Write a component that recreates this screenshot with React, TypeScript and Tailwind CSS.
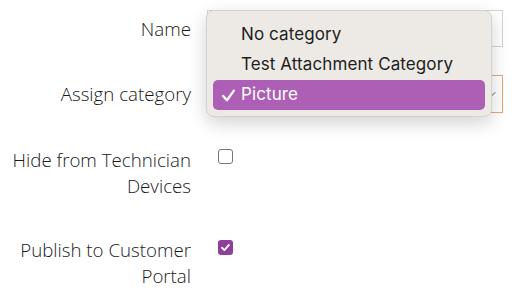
import { ChevronDown } from "lucide-react";

const label = "w-[191px] shrink-0 text-right text-[18.7px] font-light leading-[26px] text-[#1a1a1a]";

export default function App() {
  const options = ["No category", "Test Attachment Category", "Picture"];

  return (
    <div className="relative h-[297px] w-[512px] overflow-hidden bg-white font-['Open_Sans',sans-serif]">
      <div className="flex flex-col pt-[10px] pr-[9px]">
        {/* Name */}
        <div className="flex h-[37px] items-center gap-4">
          <div className={label}>Name</div>
          <input className="h-[37px] flex-1 border border-[#d4d4d4] bg-white px-2" />
        </div>

        {/* Assign category */}
        <div className="mt-[28px] flex h-[38px] items-center gap-4">
          <div className={label}>Assign category</div>
          <div className="flex h-[38px] flex-1 items-center justify-end border border-[#e9a572] bg-white pr-1">
            <ChevronDown className="h-3 w-3 text-[#555]" strokeWidth={2} />
          </div>
        </div>

        {/* Hide from Technician Devices */}
        <div className="mt-[34px] flex items-start gap-[27px]">
          <div className={label}>
            Hide from Technician
            <br />
            Devices
          </div>
          <div className="mt-[2px] h-[15px] w-[15px] rounded-[3px] border-[1.5px] border-[#767676] bg-white" />
        </div>

        {/* Publish to Customer Portal */}
        <div className="mt-[38px] flex items-start gap-[27px]">
          <div className={label}>
            Publish to Customer
            <br />
            Portal
          </div>
          <div className="mt-[3px] flex h-[15px] w-[15px] items-center justify-center rounded-[3px] bg-[#8e3f9c]">
            <svg viewBox="0 0 12 12" className="h-[11px] w-[11px]" fill="none">
              <path d="M2.2 6.3 L4.8 8.8 L9.8 3.2" stroke="white" strokeWidth="2" strokeLinecap="round" strokeLinejoin="round" />
            </svg>
          </div>
        </div>
      </div>

      {/* native select menu */}
      <div className="absolute left-[206px] top-[10px] w-[286px] rounded-[8px] border border-[#d6d3cf] bg-[#edeae6] px-[6px] pb-[6px] pt-[9px] font-['Inter',sans-serif] text-[17px] text-[#1d1d1d] shadow-[0_6px_18px_rgba(0,0,0,0.18)]">
        {options.map((opt) => {
          const selected = opt === "Picture";
          return (
            <div
              key={opt}
              className={
                selected
                  ? "flex h-[30px] items-center rounded-[5px] bg-[#ad5fb5] text-white"
                  : "flex h-[30px] items-center"
              }
            >
              <span className="flex w-[28px] justify-center">
                {selected && (
                  <svg viewBox="0 0 14 14" className="ml-[3px] h-[15px] w-[15px]" fill="none">
                    <path d="M2 7.5 L5.5 11.5 L12 2.5" stroke="white" strokeWidth="2.2" strokeLinecap="round" strokeLinejoin="round" />
                  </svg>
                )}
              </span>
              <span className="tracking-[0.1px]">{opt}</span>
            </div>
          );
        })}
      </div>
    </div>
  );
}
